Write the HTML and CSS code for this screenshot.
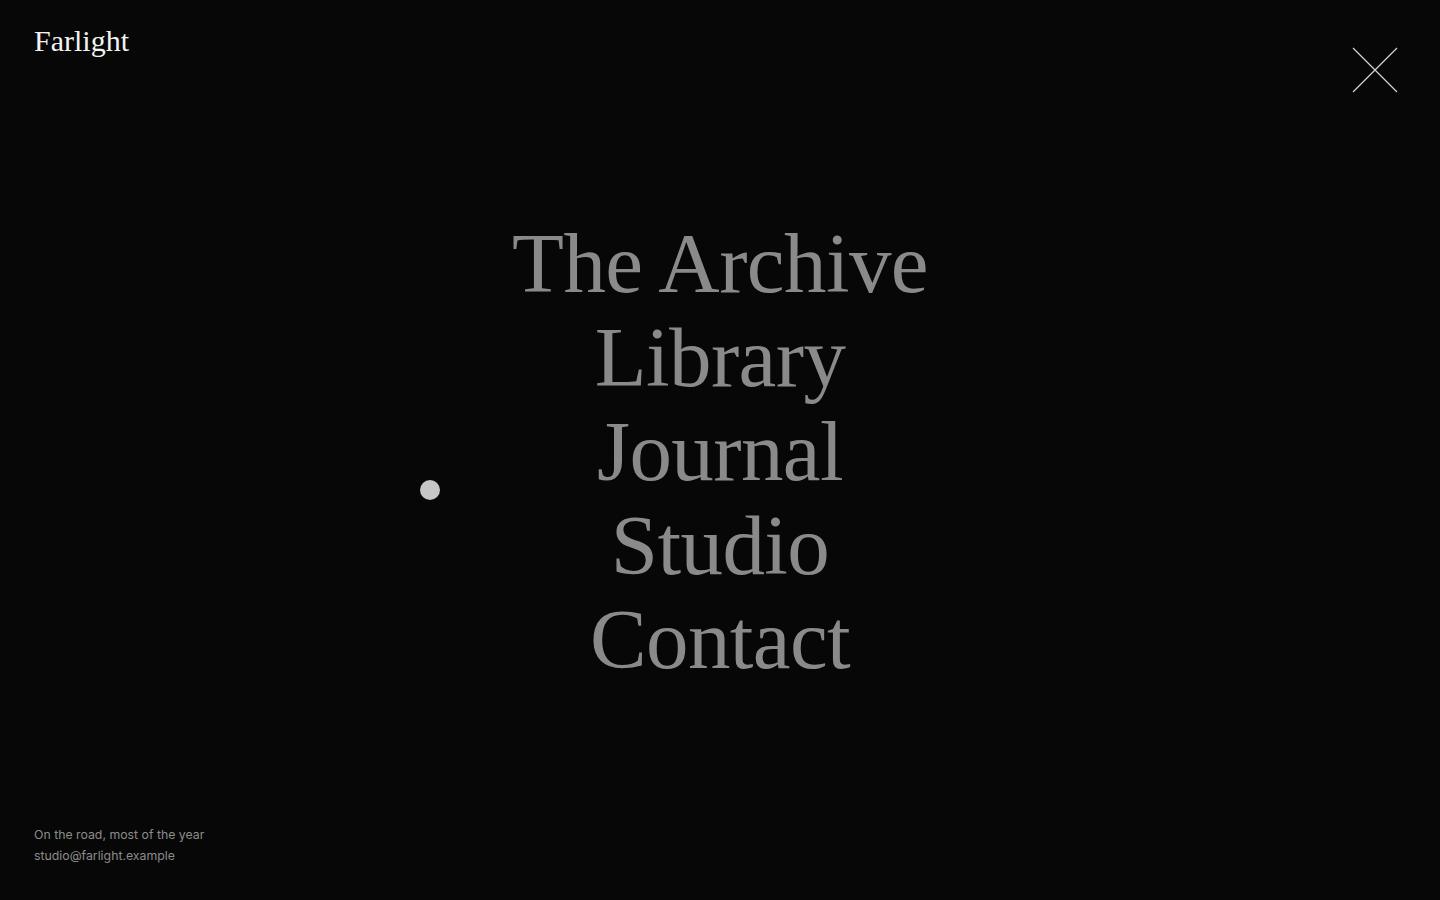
FILE: index.html
```html
<!DOCTYPE html>
<html lang="en">
<head>
<meta charset="utf-8">
<title>Farlight</title>
<link rel="stylesheet" href="styles.css">
</head>
<body>
<div class="page">
  <header class="top">
    <a class="logo" href="#">Farlight</a>
    <button class="close" aria-label="Close menu">
      <svg width="46" height="46" viewBox="0 0 46 46" fill="none" stroke="#d4d4d4" stroke-width="1.2">
        <path d="M1 1 L45 45 M45 1 L1 45"/>
      </svg>
    </button>
  </header>
  <nav class="menu">
    <a href="#">The Archive</a>
    <a href="#">Library</a>
    <a href="#">Journal</a>
    <a href="#">Studio</a>
    <a href="#">Contact</a>
  </nav>
  <footer class="foot">
    <p>On the road, most of the year</p>
    <p>studio@farlight.example</p>
  </footer>
  <div class="cursor"></div>
</div>
</body>
</html>
```
FILE: styles.css
```css
* { box-sizing: border-box; }
html, body { margin: 0; padding: 0; }
body {
  background: #070707;
  color: #8a8a8a;
  font-family: "Liberation Serif", serif;
}
.page {
  position: relative;
  width: 1440px;
  height: 900px;
  display: flex;
  flex-direction: column;
  overflow: hidden;
}
.top {
  display: flex;
  justify-content: space-between;
  align-items: flex-start;
  padding: 22px 42px 0 34px;
  height: 120px;
}
.logo {
  color: #f2f2f2;
  text-decoration: none;
  font-family: "Liberation Serif", serif;
  font-size: 30px;
  line-height: 38px;
}
.close {
  background: none;
  border: 0;
  padding: 0;
  margin-top: 25px;
  cursor: pointer;
  display: block;
}
.close svg { display: block; }
.menu {
  flex: 1;
  display: flex;
  flex-direction: column;
  align-items: center;
  justify-content: flex-start;
  padding-top: 96px;
}
.menu a {
  color: #8a8a8a;
  text-decoration: none;
  font-size: 85px;
  line-height: 94px;
  letter-spacing: -0.6px;
}
.foot {
  padding: 0 34px 34px;
  font-family: Inter, "Liberation Sans", sans-serif;
  font-size: 12.3px;
  line-height: 21px;
  color: #8c8c8c;
}
.foot p { margin: 0; }
.cursor {
  position: absolute;
  left: 420px;
  top: 480px;
  width: 20px;
  height: 20px;
  border-radius: 50%;
  background: #c6c6c6;
}
```
